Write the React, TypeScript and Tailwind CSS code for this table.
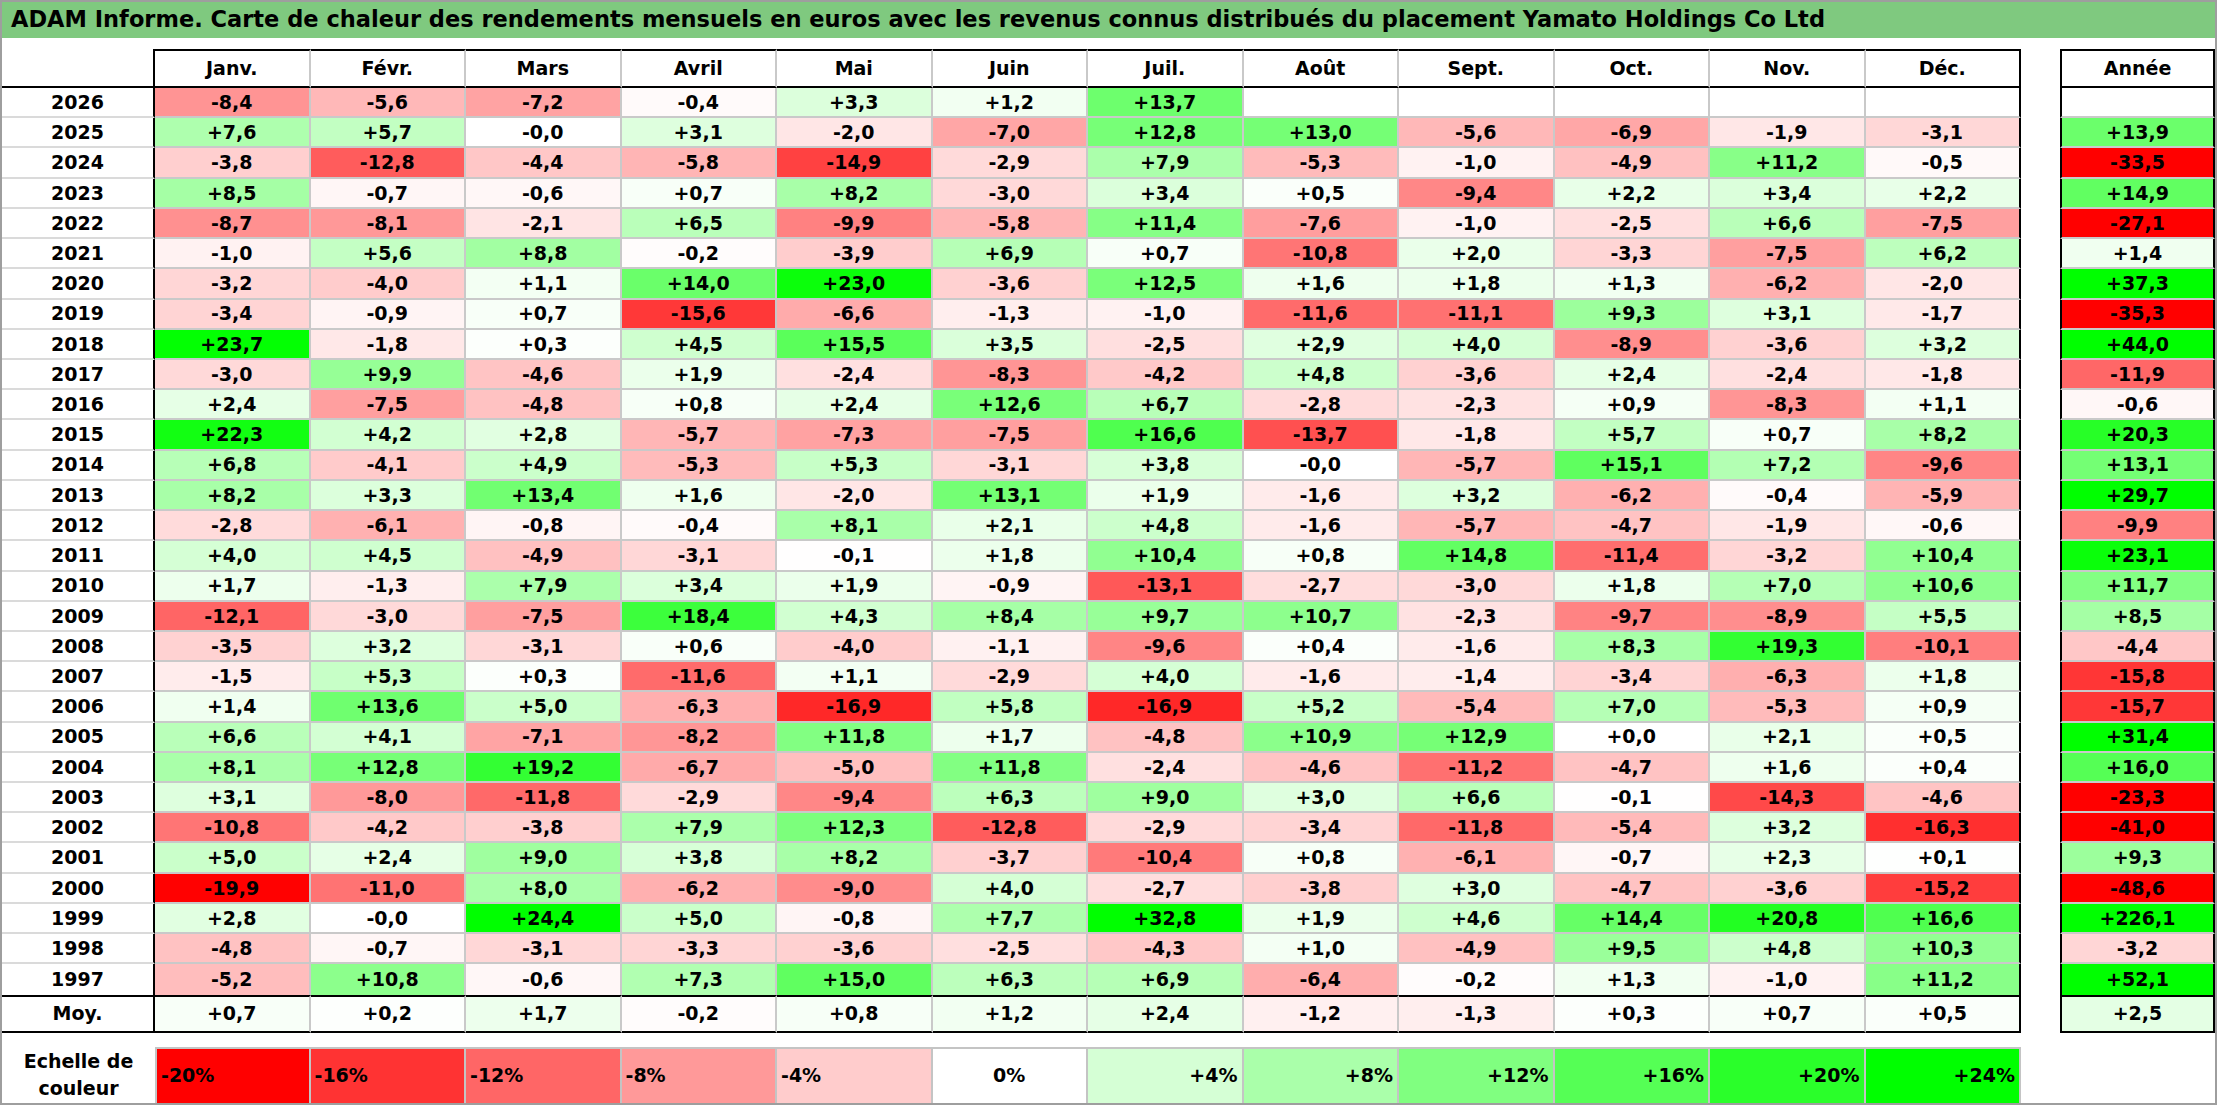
import React from 'react';

const months = ['Janv.', 'Févr.', 'Mars', 'Avril', 'Mai', 'Juin', 'Juil.', 'Août', 'Sept.', 'Oct.', 'Nov.', 'Déc.'];

// year, 12 months, année
const rows: [string, string[], string][] = [
  ['2026', ['-8,4', '-5,6', '-7,2', '-0,4', '+3,3', '+1,2', '+13,7', '', '', '', '', ''], ''],
  ['2025', ['+7,6', '+5,7', '-0,0', '+3,1', '-2,0', '-7,0', '+12,8', '+13,0', '-5,6', '-6,9', '-1,9', '-3,1'], '+13,9'],
  ['2024', ['-3,8', '-12,8', '-4,4', '-5,8', '-14,9', '-2,9', '+7,9', '-5,3', '-1,0', '-4,9', '+11,2', '-0,5'], '-33,5'],
  ['2023', ['+8,5', '-0,7', '-0,6', '+0,7', '+8,2', '-3,0', '+3,4', '+0,5', '-9,4', '+2,2', '+3,4', '+2,2'], '+14,9'],
  ['2022', ['-8,7', '-8,1', '-2,1', '+6,5', '-9,9', '-5,8', '+11,4', '-7,6', '-1,0', '-2,5', '+6,6', '-7,5'], '-27,1'],
  ['2021', ['-1,0', '+5,6', '+8,8', '-0,2', '-3,9', '+6,9', '+0,7', '-10,8', '+2,0', '-3,3', '-7,5', '+6,2'], '+1,4'],
  ['2020', ['-3,2', '-4,0', '+1,1', '+14,0', '+23,0', '-3,6', '+12,5', '+1,6', '+1,8', '+1,3', '-6,2', '-2,0'], '+37,3'],
  ['2019', ['-3,4', '-0,9', '+0,7', '-15,6', '-6,6', '-1,3', '-1,0', '-11,6', '-11,1', '+9,3', '+3,1', '-1,7'], '-35,3'],
  ['2018', ['+23,7', '-1,8', '+0,3', '+4,5', '+15,5', '+3,5', '-2,5', '+2,9', '+4,0', '-8,9', '-3,6', '+3,2'], '+44,0'],
  ['2017', ['-3,0', '+9,9', '-4,6', '+1,9', '-2,4', '-8,3', '-4,2', '+4,8', '-3,6', '+2,4', '-2,4', '-1,8'], '-11,9'],
  ['2016', ['+2,4', '-7,5', '-4,8', '+0,8', '+2,4', '+12,6', '+6,7', '-2,8', '-2,3', '+0,9', '-8,3', '+1,1'], '-0,6'],
  ['2015', ['+22,3', '+4,2', '+2,8', '-5,7', '-7,3', '-7,5', '+16,6', '-13,7', '-1,8', '+5,7', '+0,7', '+8,2'], '+20,3'],
  ['2014', ['+6,8', '-4,1', '+4,9', '-5,3', '+5,3', '-3,1', '+3,8', '-0,0', '-5,7', '+15,1', '+7,2', '-9,6'], '+13,1'],
  ['2013', ['+8,2', '+3,3', '+13,4', '+1,6', '-2,0', '+13,1', '+1,9', '-1,6', '+3,2', '-6,2', '-0,4', '-5,9'], '+29,7'],
  ['2012', ['-2,8', '-6,1', '-0,8', '-0,4', '+8,1', '+2,1', '+4,8', '-1,6', '-5,7', '-4,7', '-1,9', '-0,6'], '-9,9'],
  ['2011', ['+4,0', '+4,5', '-4,9', '-3,1', '-0,1', '+1,8', '+10,4', '+0,8', '+14,8', '-11,4', '-3,2', '+10,4'], '+23,1'],
  ['2010', ['+1,7', '-1,3', '+7,9', '+3,4', '+1,9', '-0,9', '-13,1', '-2,7', '-3,0', '+1,8', '+7,0', '+10,6'], '+11,7'],
  ['2009', ['-12,1', '-3,0', '-7,5', '+18,4', '+4,3', '+8,4', '+9,7', '+10,7', '-2,3', '-9,7', '-8,9', '+5,5'], '+8,5'],
  ['2008', ['-3,5', '+3,2', '-3,1', '+0,6', '-4,0', '-1,1', '-9,6', '+0,4', '-1,6', '+8,3', '+19,3', '-10,1'], '-4,4'],
  ['2007', ['-1,5', '+5,3', '+0,3', '-11,6', '+1,1', '-2,9', '+4,0', '-1,6', '-1,4', '-3,4', '-6,3', '+1,8'], '-15,8'],
  ['2006', ['+1,4', '+13,6', '+5,0', '-6,3', '-16,9', '+5,8', '-16,9', '+5,2', '-5,4', '+7,0', '-5,3', '+0,9'], '-15,7'],
  ['2005', ['+6,6', '+4,1', '-7,1', '-8,2', '+11,8', '+1,7', '-4,8', '+10,9', '+12,9', '+0,0', '+2,1', '+0,5'], '+31,4'],
  ['2004', ['+8,1', '+12,8', '+19,2', '-6,7', '-5,0', '+11,8', '-2,4', '-4,6', '-11,2', '-4,7', '+1,6', '+0,4'], '+16,0'],
  ['2003', ['+3,1', '-8,0', '-11,8', '-2,9', '-9,4', '+6,3', '+9,0', '+3,0', '+6,6', '-0,1', '-14,3', '-4,6'], '-23,3'],
  ['2002', ['-10,8', '-4,2', '-3,8', '+7,9', '+12,3', '-12,8', '-2,9', '-3,4', '-11,8', '-5,4', '+3,2', '-16,3'], '-41,0'],
  ['2001', ['+5,0', '+2,4', '+9,0', '+3,8', '+8,2', '-3,7', '-10,4', '+0,8', '-6,1', '-0,7', '+2,3', '+0,1'], '+9,3'],
  ['2000', ['-19,9', '-11,0', '+8,0', '-6,2', '-9,0', '+4,0', '-2,7', '-3,8', '+3,0', '-4,7', '-3,6', '-15,2'], '-48,6'],
  ['1999', ['+2,8', '-0,0', '+24,4', '+5,0', '-0,8', '+7,7', '+32,8', '+1,9', '+4,6', '+14,4', '+20,8', '+16,6'], '+226,1'],
  ['1998', ['-4,8', '-0,7', '-3,1', '-3,3', '-3,6', '-2,5', '-4,3', '+1,0', '-4,9', '+9,5', '+4,8', '+10,3'], '-3,2'],
  ['1997', ['-5,2', '+10,8', '-0,6', '+7,3', '+15,0', '+6,3', '+6,9', '-6,4', '-0,2', '+1,3', '-1,0', '+11,2'], '+52,1'],
];

const avg = ['+0,7', '+0,2', '+1,7', '-0,2', '+0,8', '+1,2', '+2,4', '-1,2', '-1,3', '+0,3', '+0,7', '+0,5'];
const avgYear = '+2,5';

const scale = [-20, -16, -12, -8, -4, 0, 4, 8, 12, 16, 20, 24];

// Excel-like 3 colour scale: red at -20, white at 0, green at +24
const heat = (s: string) => {
  if (!s) return '#ffffff';
  const v = parseFloat(s.replace(',', '.'));
  if (v < 0) {
    const c = Math.round(255 * (1 - Math.min(-v / 20, 1)));
    return `rgb(255,${c},${c})`;
  }
  const c = Math.round(255 * (1 - Math.min(v / 24, 1)));
  return `rgb(${c},255,${c})`;
};

const App = () => {
  return (
    <div className="w-[2217px] h-[1105px] bg-white border-2 border-[#9e9e9e] font-['DejaVu_Sans',sans-serif] font-bold text-[19px] text-black overflow-hidden">
      {/* Title */}
      <div className="h-[36px] bg-[#7fc97f] flex items-center px-[9px] text-[22.5px] whitespace-nowrap">
        ADAM Informe. Carte de chaleur des rendements mensuels en euros avec les revenus connus distribués du placement Yamato Holdings Co Ltd
      </div>

      <div className="flex mt-[11px]">
        {/* Main table */}
        <div className="w-[2019px] flex flex-col">
          <div className="flex h-[39px]">
            <div className="w-[153px] border-b-2 border-b-black border-r-2 border-r-black" />
            {months.map((m, i) => (
              <div
                key={m}
                className={`w-[155.5px] flex items-center justify-center border-t-2 border-t-black border-b-2 border-b-black border-r-2 ${i === 11 ? 'border-r-black' : 'border-r-[#c9c9c9]'}`}
              >
                {m}
              </div>
            ))}
          </div>

          {rows.map(([year, vals], r) => (
            <div key={year} className="flex h-[30.23px]">
              <div className={`w-[153px] flex items-center justify-center border-r-2 border-r-black ${r < 29 ? 'border-b-2 border-b-[#dadada]' : ''}`}>
                {year}
              </div>
              {vals.map((v, i) => (
                <div
                  key={i}
                  style={{ backgroundColor: heat(v) }}
                  className={`w-[155.5px] flex items-center justify-center border-r-2 ${i === 11 ? 'border-r-black' : 'border-r-[#c9c9c9]'} ${r < 29 ? 'border-b-2 border-b-[#c9c9c9]' : ''}`}
                >
                  {v}
                </div>
              ))}
            </div>
          ))}

          <div className="flex h-[38px]">
            <div className="w-[153px] flex items-center justify-center border-t-2 border-t-black border-b-2 border-b-black border-r-2 border-r-black">
              Moy.
            </div>
            {avg.map((v, i) => (
              <div
                key={i}
                style={{ backgroundColor: heat(v) }}
                className={`w-[155.5px] flex items-center justify-center border-t-2 border-t-black border-b-2 border-b-black border-r-2 ${i === 11 ? 'border-r-black' : 'border-r-[#c9c9c9]'}`}
              >
                {v}
              </div>
            ))}
          </div>
        </div>

        {/* Année column */}
        <div className="w-[155px] ml-[39px] flex flex-col">
          <div className="h-[39px] flex items-center justify-center border-2 border-black">Année</div>
          {rows.map(([year, , total], r) => (
            <div
              key={year}
              style={{ backgroundColor: heat(total) }}
              className={`h-[30.23px] flex items-center justify-center border-x-2 border-x-black ${r < 29 ? 'border-b-2 border-b-[#c9c9c9]' : ''}`}
            >
              {total}
            </div>
          ))}
          <div
            style={{ backgroundColor: heat(avgYear) }}
            className="h-[38px] flex items-center justify-center border-2 border-black"
          >
            {avgYear}
          </div>
        </div>
      </div>

      {/* Colour scale legend */}
      <div className="flex mt-[14px] h-[56px]">
        <div className="w-[153px] flex flex-col items-center justify-center leading-[27px] pt-[1px]">
          <span>Echelle de</span>
          <span>couleur</span>
        </div>
        {scale.map((s, i) => {
          const label = s === 0 ? '0%' : s > 0 ? `+${s}%` : `${s}%`;
          const align = s < 0 ? 'justify-start pl-[4px]' : s > 0 ? 'justify-end pr-[4px]' : 'justify-center';
          return (
            <div
              key={s}
              style={{ backgroundColor: heat(String(s)) }}
              className={`w-[155.5px] flex items-center ${align} border-t-2 border-t-[#c4c4c4] border-r-2 border-r-[#c4c4c4] ${i === 0 ? 'border-l-2 border-l-[#c4c4c4]' : ''}`}
            >
              {label}
            </div>
          );
        })}
      </div>
    </div>
  );
};

export default App;
